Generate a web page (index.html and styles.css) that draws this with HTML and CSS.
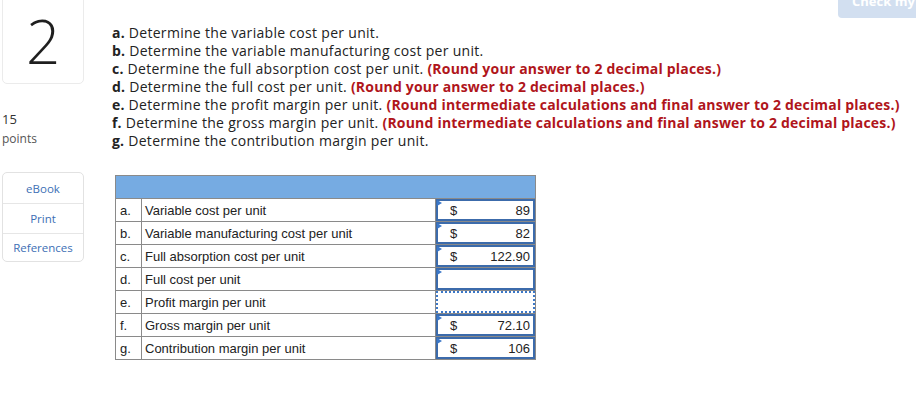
FILE: index.html
```html
<!DOCTYPE html>
<html>
<head>
<meta charset="utf-8">
<link rel="stylesheet" href="styles.css">
</head>
<body>
<div class="check-btn">Check my</div>
<div class="page">
  <aside class="side">
    <div class="qnum">2</div>
    <div class="points"><div class="pts-num">15</div><div class="pts-label">points</div></div>
    <div class="resources">
      <div class="res-item">eBook</div>
      <div class="res-item">Print</div>
      <div class="res-item">References</div>
    </div>
  </aside>
  <main class="content">
    <div class="prompt">
      <div class="line"><b>a.</b> Determine the variable cost per unit.</div>
      <div class="line"><b>b.</b> Determine the variable manufacturing cost per unit.</div>
      <div class="line"><b>c.</b> Determine the full absorption cost per unit. <span class="red">(Round your answer to 2 decimal places.)</span></div>
      <div class="line"><b>d.</b> Determine the full cost per unit. <span class="red">(Round your answer to 2 decimal places.)</span></div>
      <div class="line"><b>e.</b> Determine the profit margin per unit. <span class="red">(Round intermediate calculations and final answer to 2 decimal places.)</span></div>
      <div class="line"><b>f.</b> Determine the gross margin per unit. <span class="red">(Round intermediate calculations and final answer to 2 decimal places.)</span></div>
      <div class="line"><b>g.</b> Determine the contribution margin per unit.</div>
    </div>
    <table class="grid">
      <tr class="head"><td colspan="3"></td></tr>
      <tr><td class="let">a.</td><td class="lbl">Variable cost per unit</td><td class="inp"><div class="box"><span class="cur">$</span><span class="val">89</span></div></td></tr>
      <tr><td class="let">b.</td><td class="lbl">Variable manufacturing cost per unit</td><td class="inp"><div class="box"><span class="cur">$</span><span class="val">82</span></div></td></tr>
      <tr><td class="let">c.</td><td class="lbl">Full absorption cost per unit</td><td class="inp"><div class="box"><span class="cur">$</span><span class="val">122.90</span></div></td></tr>
      <tr><td class="let">d.</td><td class="lbl">Full cost per unit</td><td class="inp"><div class="box"></div></td></tr>
      <tr><td class="let">e.</td><td class="lbl">Profit margin per unit</td><td class="inp"><div class="box dotted"></div></td></tr>
      <tr><td class="let">f.</td><td class="lbl">Gross margin per unit</td><td class="inp"><div class="box"><span class="cur">$</span><span class="val">72.10</span></div></td></tr>
      <tr><td class="let">g.</td><td class="lbl">Contribution margin per unit</td><td class="inp"><div class="box"><span class="cur">$</span><span class="val">106</span></div></td></tr>
    </table>
  </main>
</div>
</body>
</html>
```
FILE: styles.css
```css
html, body { margin: 0; padding: 0; background: #fff; }
body { font-family: "Open Sans", "Liberation Sans", sans-serif; color: #222; width: 916px; height: 408px; overflow: hidden; position: relative; }

.check-btn {
  position: absolute; top: -8px; left: 838px; width: 90px; height: 26px;
  background: #d2dff0; color: #fff; font-weight: 700; font-size: 13px;
  border-radius: 4px; padding-left: 14px; box-sizing: border-box; line-height: 18px;
}

.page { display: flex; padding-left: 2px; }
.side { width: 82px; display: flex; flex-direction: column; flex-shrink: 0; }
.qnum {
  margin-top: -8px; height: 92px; box-sizing: border-box;
  border: 1px solid #ebebeb; border-radius: 0 0 5px 5px;
  display: flex; align-items: center; justify-content: center;
  font-size: 60px; font-weight: 300; color: #1f1f1f; padding-top: 6px;
}
.points { margin-top: 25px; font-size: 12px; line-height: 20px; color: #333; }
.pts-num { font-size: 13px; }
.pts-label { color: #555; }
.resources {
  margin-top: 23px; border: 1px solid #e2e2e2; border-radius: 5px; width: 82px; box-sizing: border-box;
}
.res-item {
  height: 29px; display: flex; align-items: center; justify-content: center;
  font-size: 11.5px; color: #3d6fb5; border-top: 1px solid #e6e6e6;
}
.res-item:first-child { border-top: 0; height: 30px; }
.res-item:last-child { height: 27px; }

.content { margin-left: 28px; padding-top: 24px; }
.prompt { font-size: 14px; color: #222; }
.line { height: 18px; line-height: 18px; white-space: nowrap; letter-spacing: 0.3px; }
.line b { font-weight: 700; letter-spacing: 0.2px; }
.red { color: #b0151b; font-weight: 700; letter-spacing: 0.2px; }

.grid {
  margin-top: 25px; margin-left: 3px; border-collapse: collapse; width: 421px;
  font-family: "Liberation Sans", Arial, sans-serif; font-size: 13px; color: #222;
}
.grid td { border: 1px solid #8a8a8a; height: 23px; padding: 0; box-sizing: border-box; }
.grid tr.head td { background: #76abe2; height: 23px; }
.let { width: 26px; padding-left: 4px !important; }
.lbl { width: 294px; padding-left: 3px !important; }
.inp { width: 100px; position: relative; }
.box {
  position: relative; height: 22px; margin: 0; border: 2px solid #3c6bab; box-sizing: border-box;
  display: flex; align-items: center; justify-content: space-between; padding: 0 3px 0 12px;
}
.box::before {
  content: ""; position: absolute; left: -1px; top: -1px;
  border-left: 5px solid #3c78c8; border-top: 3px solid transparent; border-bottom: 3px solid transparent;
}
.box.dotted { border: 2px dotted #3c78c8; }
.box.dotted::before { display: none; }
```
